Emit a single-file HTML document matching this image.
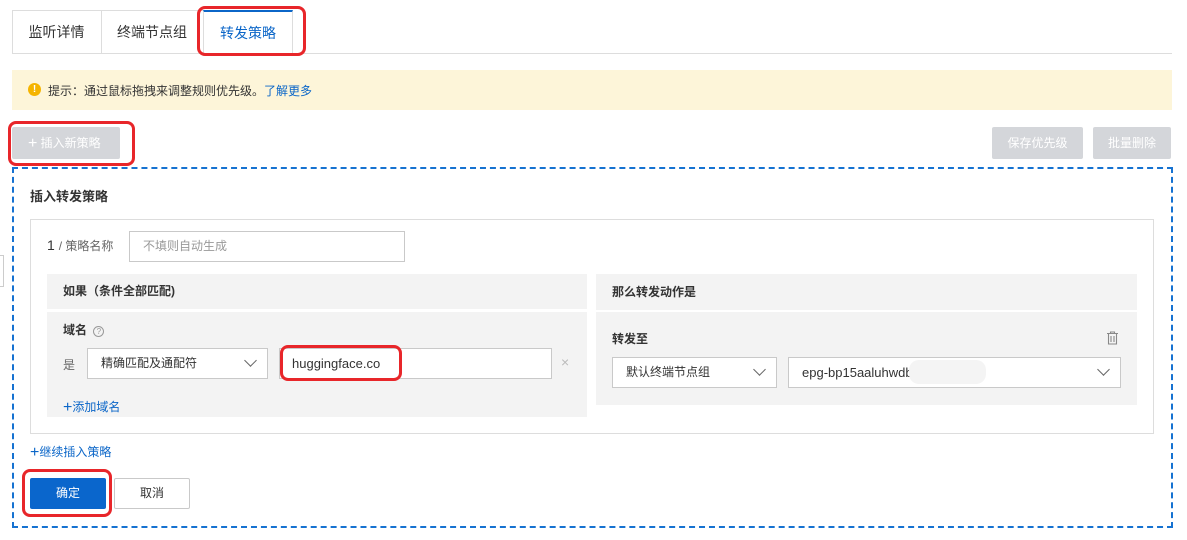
<!DOCTYPE html>
<html><head><meta charset="utf-8"><style>
*{box-sizing:border-box;margin:0;padding:0}
body{width:1187px;height:540px;background:#fff;position:relative;overflow:hidden;font-family:"Liberation Sans","Noto Sans CJK SC",sans-serif;font-size:12px;color:#333}
.a{position:absolute}
.red{position:absolute;border:3px solid #e8262a;border-radius:8px}
.inp{position:absolute;background:#fff;border:1px solid #c9c9c9;height:31px;line-height:29px;padding-left:13px;font-size:12px}
.chev{position:absolute;right:8px;width:9px;height:9px;border-right:1.3px solid #666;border-bottom:1.3px solid #666;transform:rotate(45deg);top:7px}
</style></head><body>
<div class="a" style="left:12px;top:10px;width:281px;height:44px;border:1px solid #ddd;border-bottom:none"></div>
<div class="a" style="left:12px;top:53px;width:1160px;height:1px;background:#ddd"></div>
<div class="a" style="left:12px;top:11px;width:89px;height:43px;line-height:43px;text-align:center;font-size:14px;color:#333">监听详情</div>
<div class="a" style="left:101px;top:10px;width:1px;height:43px;background:#ddd"></div>
<div class="a" style="left:101px;top:11px;width:102px;height:43px;line-height:43px;text-align:center;font-size:14px;color:#333">终端节点组</div>
<div class="a" style="left:203px;top:10px;width:90px;height:44px;line-height:43px;text-align:center;font-size:14px;color:#0b66c8;background:#fff;border-left:1px solid #ddd;border-right:1px solid #ddd;border-top:2px solid #0b66c8">转发策略</div>
<div class="red" style="left:197px;top:6px;width:109px;height:50px"></div>
<div class="a" style="left:12px;top:70px;width:1160px;height:40px;background:#fdf5d9"></div>
<div class="a" style="left:28px;top:83px;width:13px;height:13px;border-radius:50%;background:#f5b400;color:#fff;font-size:10px;font-weight:bold;line-height:13px;text-align:center">!</div>
<div class="a" style="left:48px;top:82px;font-size:12px;color:#333">提示：通过鼠标拖拽来调整规则优先级。<span style="color:#0b66c8">了解更多</span></div>
<div class="a" style="left:12px;top:127px;width:108px;height:32px;background:#d4d6da;border-radius:2px;color:#fff;line-height:32px;font-size:12px;padding-left:16px"><span style="font-size:16px;vertical-align:-1px">+</span> 插入新策略</div>
<div class="red" style="left:8px;top:121px;width:127px;height:45px"></div>
<div class="a" style="left:992px;top:127px;width:91px;height:32px;background:#d4d6da;border-radius:2px;color:#fff;line-height:32px;text-align:center">保存优先级</div>
<div class="a" style="left:1093px;top:127px;width:78px;height:32px;background:#d4d6da;border-radius:2px;color:#fff;line-height:32px;text-align:center">批量删除</div>
<div class="a" style="left:12px;top:167px;width:1161px;height:361px;border:2px dashed #1672d1"></div>
<div class="a" style="left:30px;top:186px;font-size:13px;font-weight:bold;color:#333">插入转发策略</div>
<div class="a" style="left:30px;top:219px;width:1124px;height:215px;border:1px solid #ddd"></div>
<div class="a" style="left:0;top:255px;width:4px;height:32px;border:1px solid #ccc;border-left:none"></div>
<div class="a" style="left:47px;top:237px;font-size:14px;color:#333">1 <span style="font-size:12px;color:#666">/ 策略名称</span></div>
<div class="inp" style="left:129px;top:231px;width:276px;color:#999">不填则自动生成</div>
<div class="a" style="left:47px;top:274px;width:540px;height:35px;background:#f3f3f3;line-height:35px;padding-left:16px;font-weight:bold">如果（条件全部匹配)</div>
<div class="a" style="left:47px;top:312px;width:540px;height:105px;background:#f3f3f3"></div>
<div class="a" style="left:63px;top:321px;font-weight:bold">域名 <span style="display:inline-block;width:11px;height:11px;border:1px solid #999;border-radius:50%;font-size:8px;line-height:9px;text-align:center;color:#999;font-weight:normal;margin-left:3px">?</span></div>
<div class="a" style="left:63px;top:356px;color:#666">是</div>
<div class="inp" style="left:87px;top:348px;width:181px">精确匹配及通配符<div class="chev" style="right:12px"></div></div>
<div class="inp" style="left:279px;top:348px;width:273px;padding-left:12px;font-size:13px">huggingface.co</div>
<div class="red" style="left:280px;top:345px;width:122px;height:36px"></div>
<div class="a" style="left:561px;top:354px;color:#bbb;font-size:14px">×</div>
<div class="a" style="left:63px;top:398px;color:#0b66c8"><span style="font-size:16px;vertical-align:-1px">+</span>添加域名</div>
<div class="a" style="left:596px;top:274px;width:541px;height:36px;background:#f3f3f3;line-height:36px;padding-left:16px;font-weight:bold">那么转发动作是</div>
<div class="a" style="left:596px;top:312px;width:541px;height:93px;background:#f3f3f3"></div>
<div class="a" style="left:612px;top:330px;font-weight:bold">转发至</div>
<svg class="a" style="left:1106px;top:331px" width="13" height="14" viewBox="0 0 13 14"><path d="M1 2.5h11M4.5 2.5V1h4v1.5M2.5 2.5v10.5h8V2.5M5 5v6M8 5v6" fill="none" stroke="#888" stroke-width="1.1"/></svg>
<div class="inp" style="left:612px;top:357px;width:165px">默认终端节点组<div class="chev" style="right:12px"></div></div>
<div class="inp" style="left:788px;top:357px;width:333px;font-size:13px">epg-bp15aaluhwdb<div class="chev" style="right:12px"></div></div>
<div class="a" style="left:909px;top:360px;width:77px;height:24px;background:#f4f4f4;border-radius:10px"></div>
<div class="a" style="left:30px;top:443px;color:#0b66c8"><span style="font-size:16px;vertical-align:-1px">+</span>继续插入策略</div>
<div class="a" style="left:30px;top:478px;width:76px;height:31px;background:#0a66cc;color:#fff;line-height:31px;text-align:center;border-radius:2px">确定</div>
<div class="a" style="left:114px;top:478px;width:76px;height:31px;border:1px solid #c9c9c9;line-height:29px;text-align:center;border-radius:2px">取消</div>
<div class="red" style="left:22px;top:469px;width:90px;height:48px"></div>
</body></html>
